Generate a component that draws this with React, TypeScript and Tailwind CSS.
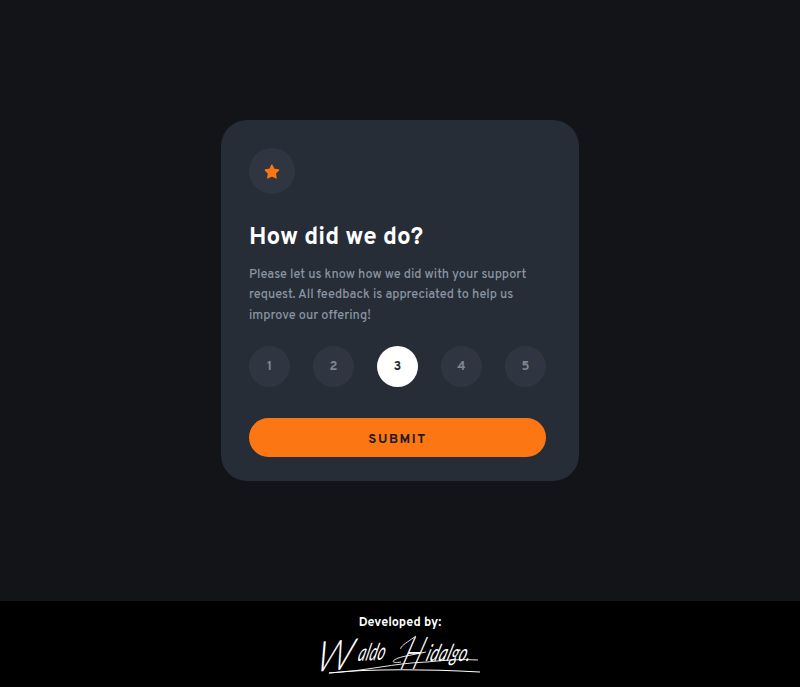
import { useState } from "react";

const ratings = [1, 2, 3, 4, 5];

function Star() {
  return (
    <svg width="15" height="15" viewBox="0 0 17 16" className="-translate-x-[0.5px]" aria-hidden="true">
      <path
        d="m9.067.43 1.99 4.031c.112.228.33.386.58.422l4.45.647a.772.772 0 0 1 .427 1.316l-3.22 3.138a.773.773 0 0 0-.222.683l.76 4.431a.772.772 0 0 1-1.12.813l-3.98-2.092a.773.773 0 0 0-.718 0l-3.98 2.092a.772.772 0 0 1-1.119-.813l.76-4.431a.77.77 0 0 0-.222-.683L.233 6.846A.772.772 0 0 1 .661 5.53l4.449-.647a.772.772 0 0 0 .58-.422L7.68.43a.774.774 0 0 1 1.387 0Z"
        fill="#fc7614"
      />
    </svg>
  );
}

function Signature() {
  return (
    <svg className="overflow-visible" width="162" height="44" viewBox="0 0 162 44" fill="none" stroke="white" aria-hidden="true">
      <g fill="white" stroke="none" fontFamily="Lato, 'Liberation Sans', sans-serif" fontStyle="italic" fontWeight="300">
        <text transform="translate(-5 40) rotate(-5) skewX(-18) scale(1.02 1.1)" fontSize="38">W</text>
        <text transform="translate(38 29) rotate(-3) skewX(-18) scale(.8 1.3)" fontSize="18" fontWeight="400" letterSpacing=".4">aldo</text>
        <text transform="translate(80 37) skewX(-20) scale(.68 1.16)" fontSize="39">H</text>
        <text transform="translate(106 29) skewX(-18) scale(.84 1.3)" fontSize="18" fontWeight="400" letterSpacing=".6">idalgo.</text>
      </g>
      <path d="M10 41C48 39 75 31 108 30C126 28 142 27 159 28" strokeWidth="0.9" />
      <path d="M10 41C48 37 105 37 161 40" strokeWidth="1.1" />
      <path d="M82 30C70 32 72 27 87 24L107 20" strokeWidth="0.9" />
      <path d="M82 17C80 15 90 9 97 4" strokeWidth="0.9" />
    </svg>
  );
}

export default function App() {
  const [selected, setSelected] = useState(3);
  return (
    <div className="flex h-[687px] flex-col bg-[#121417] font-['Overpass','Roboto',sans-serif]">
      <main className="flex h-[601px] items-center justify-center">
        <section className="h-[361px] w-[358px] rounded-[26px] bg-[#262d37] pt-7 pr-[33px] pl-7">
          <div className="flex size-[46px] items-center justify-center rounded-full bg-[#2f3641]">
            <Star />
          </div>
          <h1 className="mt-7 text-[24.3px] leading-8 font-bold whitespace-nowrap text-white">How did we do?</h1>
          <p className="mt-[11px] text-[12.7px] leading-[20.3px] font-medium whitespace-nowrap text-[#8b95a3]">
            Please let us know how we did with your support
            <br />
            request. All feedback is appreciated to help us
            <br />
            improve our offering!
          </p>
          <div className="mt-5 flex justify-between">
            {ratings.map((n) => (
              <button
                key={n}
                onClick={() => setSelected(n)}
                className={
                  "size-[41px] rounded-full pt-0.5 text-[13px] font-bold " +
                  (n === selected ? "bg-white text-[#262d37]" : "bg-[#2f3641] text-[#7f8794]")
                }
              >
                {n}
              </button>
            ))}
          </div>
          <button className="mt-[31px] h-[39px] w-full rounded-full bg-[#fc7614] pt-1.5 text-[13.2px] font-bold tracking-[1.6px] text-[#1b1c20]">
            SUBMIT
          </button>
        </section>
      </main>
      <footer className="flex h-[86px] flex-col items-center bg-black pt-[13px]">
        <p className="text-[12.6px] leading-[18px] font-bold text-white">Developed by:</p>
        <Signature />
      </footer>
    </div>
  );
}
